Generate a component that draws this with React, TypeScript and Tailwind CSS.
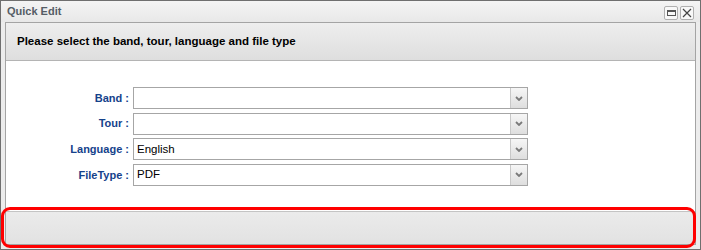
import React from "react";

const font = { fontFamily: '"Liberation Sans", Arial, sans-serif' };

function Chevron() {
  return (
    <svg width="8" height="5" viewBox="0 0 8 5">
      <path d="M1 1 L4 4 L7 1" fill="none" stroke="#7a7a7a" strokeWidth="1.8" />
    </svg>
  );
}

function Combo({ value, label }: { value: string; label: string }) {
  return (
    <div className="flex items-center h-[22px]">
      <div className="w-[127px] pr-[4px] text-right text-[11px] font-bold text-[#15428b]">{label} :</div>
      <div className="flex h-[22px] w-[395px] border border-[#a6a6a6] bg-white">
        <div className="flex-1 flex items-center pl-[3px] text-[11.5px] text-black">{value}</div>
        <div className="w-[17px] flex items-center justify-center border-l border-[#c8c8c8] bg-gradient-to-b from-[#f6f6f6] to-[#dedede]">
          <Chevron />
        </div>
      </div>
    </div>
  );
}

export default function App() {
  return (
    <div style={font} className="relative w-[701px] h-[250px] bg-white">
      <div className="w-[701px] h-[250px] flex flex-col border border-[#6f6f6f] bg-[#ececec]">
        <div className="h-[21px] flex justify-between pl-[6px] pr-[6px] bg-gradient-to-b from-[#f4f4f4] to-[#e8e8e8]">
          <span className="self-center text-[11px] font-bold text-[#555d66]">Quick Edit</span>
          <div className="flex gap-[2px] mt-[5px]">
            <div className="w-[14px] h-[14px] border border-[#b0b0b0] rounded-[2px] bg-[#f8f8f8] flex items-center justify-center">
              <div className="w-[9px] h-[6px] border border-[#555] border-t-[2px]" />
            </div>
            <div className="w-[14px] h-[14px] border border-[#b0b0b0] rounded-[2px] bg-[#f8f8f8] flex items-center justify-center">
              <svg width="10" height="10" viewBox="0 0 10 10">
                <path d="M1 1 L9 9 M9 1 L1 9" stroke="#444" strokeWidth="1.2" />
              </svg>
            </div>
          </div>
        </div>
        <div className="flex-1 ml-[4px] mr-[4px] mb-[4px] flex flex-col border border-[#a4a4a4] bg-white">
          <div className="h-[38px] flex items-center pl-[11px] pt-[1px] border-b border-[#b4b4b4] bg-gradient-to-b from-[#eeeeee] to-[#dedede] text-[11.5px] font-bold text-black">
            Please select the band, tour, language and file type
          </div>
          <div className="flex-1 flex flex-col gap-[3.6px] pt-[26px]">
            <Combo label="Band" value="" />
            <Combo label="Tour" value="" />
            <Combo label="Language" value="English" />
            <Combo label="FileType" value="PDF" />
          </div>
          <div className="h-[33px] border-t border-[#c4c4c4] bg-gradient-to-b from-[#ebebeb] to-[#e2e2e2]" />
        </div>
      </div>
      <div className="absolute left-[1px] top-[207px] w-[695px] h-[41px] rounded-[9px] border-[3px] border-[#ff0000]" />
    </div>
  );
}
